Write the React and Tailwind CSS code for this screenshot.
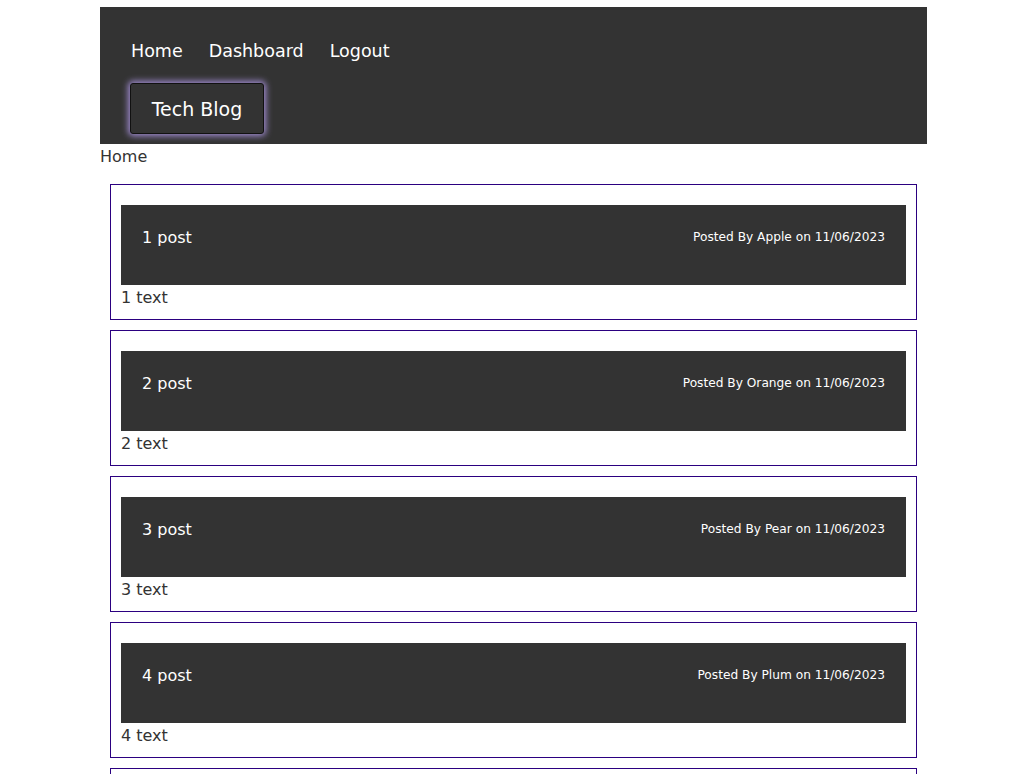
const posts = [
  { id: 1, author: 'Apple' },
  { id: 2, author: 'Orange' },
  { id: 3, author: 'Pear' },
  { id: 4, author: 'Plum' },
  { id: 5, author: 'Grape' },
];

const App = () => {
  return (
    <div className="min-h-screen bg-white font-['DejaVu_Sans',sans-serif] text-[#333]">
      <div className="ml-[100px] w-[827px] pt-[7px]">
        {/* Header */}
        <header className="bg-[#333] pl-[30px] pt-[31px] pb-[10px]">
          <nav className="ml-[1px] flex gap-[26px] text-[17.5px] leading-[26px] text-white">
            <a href="#">Home</a>
            <a href="#">Dashboard</a>
            <a href="#">Logout</a>
          </nav>
          <button className="mt-[19px] h-[51px] w-[134px] rounded-[3px] border border-[#111] bg-[#333] pt-[2px] text-[19px] text-white shadow-[0_0_6px_2px_#a08cd0]">
            Tech Blog
          </button>
        </header>

        <p className="pt-[1px] text-[16px] leading-[24px]">Home</p>

        {/* Posts */}
        <div className="pt-[15px]">
          {posts.map((post) => (
            <div key={post.id} className="mx-[10px] mb-[10px] border border-[#2b0080] px-[10px] pt-[20px] pb-[9px]">
              <div className="flex h-[80px] items-start justify-between bg-[#333] px-[21px] pt-[22px] text-white">
                <h2 className="text-[16px] leading-[22px]">{post.id} post</h2>
                <p className="text-[12.2px] leading-[20px]">Posted By {post.author} on 11/06/2023</p>
              </div>
              <p className="pt-[1px] text-[16px] leading-[24px]">{post.id} text</p>
            </div>
          ))}
        </div>
      </div>
    </div>
  );
};

export default App;
